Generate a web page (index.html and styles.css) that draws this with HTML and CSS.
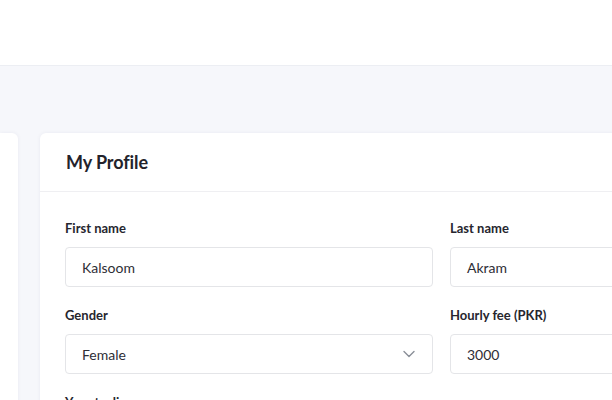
FILE: index.html
```html
<!DOCTYPE html>
<html>
<head>
<meta charset="utf-8">
<link rel="stylesheet" href="styles.css">
</head>
<body>
<header class="topbar"></header>
<main class="page">
  <aside class="side-card"></aside>
  <section class="card">
    <div class="card-head"><h1>My Profile</h1></div>
    <div class="card-body">
      <div class="grid">
        <div class="field">
          <label>First name</label>
          <div class="input">Kalsoom</div>
        </div>
        <div class="field">
          <label>Last name</label>
          <div class="input">Akram</div>
        </div>
        <div class="field">
          <label>Gender</label>
          <div class="input select">Female
            <svg class="chev" width="12" height="8" viewBox="0 0 12 8"><path d="M1 1.5l5 5 5-5" fill="none" stroke="#8a8f98" stroke-width="1.4" stroke-linecap="round" stroke-linejoin="round"/></svg>
          </div>
        </div>
        <div class="field">
          <label>Hourly fee (PKR)</label>
          <div class="input">3000</div>
        </div>
        <div class="field">
          <label>Your tagline</label>
        </div>
      </div>
    </div>
  </section>
</main>
</body>
</html>
```

FILE: styles.css
```css
* { box-sizing: border-box; }
html, body { margin: 0; padding: 0; }
body {
  width: 612px;
  height: 400px;
  overflow: hidden;
  background: #f6f7fb;
  font-family: "Lato", "Open Sans", sans-serif;
  color: #2a2a33;
}
.topbar {
  height: 66px;
  background: #ffffff;
  border-bottom: 1px solid #eceef3;
}
.page {
  display: flex;
  gap: 22px;
  padding-top: 67px;
  height: 334px;
  overflow: hidden;
}
.side-card {
  flex: 0 0 18px;
  height: 400px;
  background: #ffffff;
  border-radius: 0 6px 0 0;
  box-shadow: 0 0 4px rgba(30, 40, 80, 0.06);
}
.card {
  flex: 0 0 820px;
  height: 400px;
  background: #ffffff;
  border-radius: 6px;
  box-shadow: 0 0 4px rgba(30, 40, 80, 0.06);
}
.card-head {
  height: 59px;
  padding: 0 26px;
  display: flex;
  align-items: center;
  border-bottom: 1px solid #efeff2;
}
.card-head h1 {
  margin: 0;
  font-size: 18px;
  font-weight: 700;
  color: #23232b;
  letter-spacing: -0.1px;
}
.card-body {
  padding: 28px 25px 0;
}
.grid {
  display: grid;
  grid-template-columns: 368px 368px;
  column-gap: 17px;
  row-gap: 20px;
}
.field label {
  display: block;
  font-size: 13px;
  font-weight: 700;
  color: #26262e;
  margin-bottom: 11px;
  line-height: 16px;
}
.input {
  height: 40px;
  border: 1px solid #e4e5e8;
  border-radius: 4px;
  padding: 0 16px;
  display: flex;
  align-items: center;
  font-size: 14px;
  color: #2e2e36;
}
.select {
  justify-content: space-between;
}
.chev { margin-right: 1px; }
```
